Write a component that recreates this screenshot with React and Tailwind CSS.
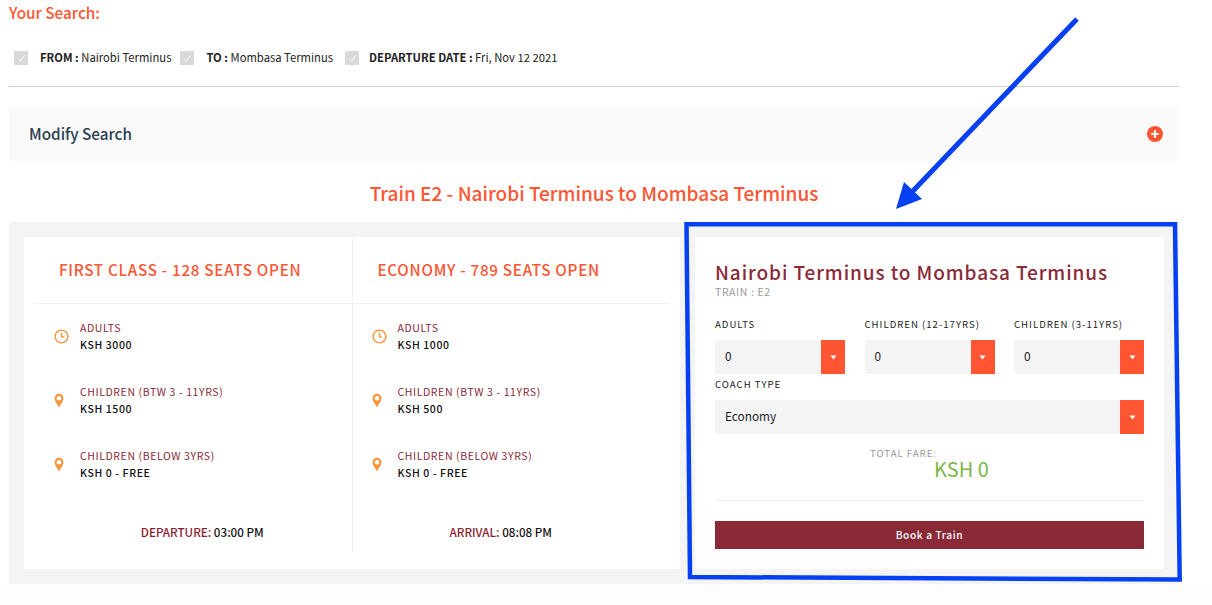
const font = { fontFamily: '"Noto Sans CJK SC", "Noto Sans", sans-serif' };

const fares = [
  {
    title: "FIRST CLASS - 128 SEATS OPEN",
    rows: [
      { icon: "clock", label: "ADULTS", value: "KSH 3000" },
      { icon: "pin", label: "CHILDREN (BTW 3 - 11YRS)", value: "KSH 1500" },
      { icon: "pin", label: "CHILDREN (BELOW 3YRS)", value: "KSH 0 - FREE" },
    ],
    footLabel: "DEPARTURE:",
    footValue: "03:00 PM",
  },
  {
    title: "ECONOMY - 789 SEATS OPEN",
    rows: [
      { icon: "clock", label: "ADULTS", value: "KSH 1000" },
      { icon: "pin", label: "CHILDREN (BTW 3 - 11YRS)", value: "KSH 500" },
      { icon: "pin", label: "CHILDREN (BELOW 3YRS)", value: "KSH 0 - FREE" },
    ],
    footLabel: "ARRIVAL:",
    footValue: "08:08 PM",
  },
];

function Check() {
  return (
    <span className="flex h-[14px] w-[14px] shrink-0 items-center justify-center bg-[#d9d9d9]">
      <svg width="9" height="9" viewBox="0 0 9 9" fill="none">
        <path d="M1.5 5 L3.5 7.2 L7.5 1.5" stroke="#fff" strokeWidth="1" />
      </svg>
    </span>
  );
}

function RowIcon({ type }) {
  if (type === "clock") {
    return (
      <svg width="15" height="15" viewBox="0 0 15 15" fill="none" stroke="#fb9338" strokeWidth="1.4">
        <circle cx="7.5" cy="7.5" r="6.4" />
        <path d="M7.5 4 V7.9 H10.3" />
      </svg>
    );
  }
  return (
    <svg width="10" height="15" viewBox="0 0 10 15" fill="none">
      <path
        d="M5 14.4 C3.8 11.6 0.6 8.8 0.6 5.2 A4.4 4.4 0 0 1 9.4 5.2 C9.4 8.8 6.2 11.6 5 14.4 Z"
        fill="#fb9338"
      />
      <circle cx="5" cy="5.2" r="2.3" fill="#fff" />
    </svg>
  );
}

function Select({ value }) {
  return (
    <div className="flex h-[34px] items-center justify-between bg-[#f4f4f4]">
      <span className="pb-[2px] pl-[10px] text-[11.8px] text-[#222]">{value}</span>
      <span className="flex h-full w-[24px] items-center justify-center bg-[#ff5533]">
        <svg width="7" height="5" viewBox="0 0 7 5">
          <path d="M0.5 0.5 H6.5 L3.5 4.5 Z" fill="#fff" />
        </svg>
      </span>
    </div>
  );
}

function FareColumn({ fare, last }) {
  return (
    <div className={`h-[315px] flex-1 ${last ? "" : "border-r border-[#f1f1f1]"}`}>
      <div className={`flex h-[67px] items-center border-b border-[#f1f1f1] pb-[2px] ${last ? "mr-[11px] pl-[25px]" : "ml-[10px] pl-[25px]"}`}>
        <h3 className="text-[15.25px] leading-[20px] font-medium tracking-[0.7px] text-[#ff5533]">
          {fare.title}
        </h3>
      </div>
      <div className={`flex flex-col gap-[30px] pt-[15px] ${last ? "pl-[19px]" : "pl-[30px]"}`}>
        {fare.rows.map((row) => (
          <div key={row.label} className="flex h-[34px] items-center gap-[11px]">
            <span className="flex w-[15px]">
              <RowIcon type={row.icon} />
            </span>
            <div>
              <p className="text-[10.5px] leading-[17px] tracking-[0.6px] text-[#8a2a37]">{row.label}</p>
              <p className="text-[10.5px] leading-[17px] font-medium tracking-[0.6px] text-[#111]">{row.value}</p>
            </div>
          </div>
        ))}
      </div>
      <p className={`mt-[42px] text-center text-[11.65px] leading-[18px] font-medium text-[#111] ${last ? "pr-[31px]" : "pl-[29px]"}`}>
        <span className="text-[#8a1c30]">{fare.footLabel}</span> {fare.footValue}
      </p>
    </div>
  );
}

export default function App() {
  return (
    <div className="relative h-[605px] w-[1212px] overflow-hidden bg-white" style={font}>
      <div className="w-[1179px] pl-[9px]">
        <h2 className="pt-[2px] text-[15.3px] leading-[20px] font-medium text-[#ff5533]">Your Search:</h2>

        <div className="mt-[26px] flex h-[20px] items-center pl-[5px] text-[11.25px] text-[#222]">
          <Check />
          <span className="ml-[12px] pb-[1px]"><b className="font-bold">FROM :</b> Nairobi Terminus</span>
          <span className="ml-[9px]"><Check /></span>
          <span className="ml-[12px] pb-[1px]"><b className="font-bold">TO :</b> Mombasa Terminus</span>
          <span className="ml-[12px]"><Check /></span>
          <span className="ml-[10px] pb-[1px]"><b className="font-bold">DEPARTURE DATE :</b> Fri, Nov 12 2021</span>
        </div>

        <div className="mt-[18px] border-t border-[#cccccc]" />

        <div className="mt-[20px] flex h-[54px] items-center justify-between bg-[#fafafa] pr-[16px] pl-[20px]">
          <span className="pb-[2px] text-[15.25px] font-medium text-[#2c3e50]">Modify Search</span>
          <svg width="16" height="16" viewBox="0 0 16 16">
            <circle cx="8" cy="8" r="8" fill="#ff5533" />
            <path d="M8 4.2 V11.8 M4.2 8 H11.8" stroke="#fff" strokeWidth="2.2" />
          </svg>
        </div>

        <h2 className="mt-[18px] mb-[15px] text-center text-[19px] leading-[28px] font-medium text-[#ff5533]">
          Train E2 - Nairobi Terminus to Mombasa Terminus
        </h2>

        <div className="flex h-[362px] gap-[15px] bg-[#f4f4f4] p-[15px]">
          <div className="flex w-[656px] bg-white">
            {fares.map((fare, i) => (
              <FareColumn key={fare.title} fare={fare} last={i === 1} />
            ))}
          </div>

          <div className="flex-1 bg-white px-[20px] pt-[23px]">
            <h3 className="text-[19px] leading-[24px] font-medium tracking-[0.9px] text-[#8a2a37]">
              Nairobi Terminus to Mombasa Terminus
            </h3>
            <p className="pt-[1px] text-[10.5px] leading-[14px] tracking-[0.6px] text-[#999]">TRAIN : E2</p>

            <div className="mt-[18px] flex justify-between">
              {["ADULTS", "CHILDREN (12-17YRS)", "CHILDREN (3-11YRS)"].map((label) => (
                <div key={label} className="w-[130px]">
                  <p className="mb-[9px] text-[9.6px] leading-[14px] tracking-[1px] text-[#222]">{label}</p>
                  <Select value="0" />
                </div>
              ))}
            </div>

            <p className="mt-[3px] mb-[9px] text-[9.6px] leading-[14px] tracking-[1px] text-[#222]">COACH TYPE</p>
            <Select value="Economy" />

            <div className="relative h-[66px]">
              <p className="absolute top-[12px] left-[155px] text-[9.6px] leading-[14px] tracking-[1px] text-[#999]">TOTAL FARE:</p>
              <p className="absolute top-[22px] left-[219px] text-[20px] leading-[26px] text-[#7ab648]">KSH 0</p>
            </div>

            <div className="border-t border-[#f1f1f1]" />

            <button className="mt-[20px] h-[28px] w-full bg-[#8a2a37] text-[10.2px] font-medium tracking-[0.6px] text-white">
              Book a Train
            </button>
          </div>
        </div>
      </div>

      <div className="h-[21px] bg-[#fdfdfd]" />

      {/* annotation drawn over the page */}
      <svg className="absolute top-0 left-0" width="1212" height="605" viewBox="0 0 1212 605" fill="none">
        <path d="M1077 19 L911 193" stroke="#0540f2" strokeWidth="5" />
        <path d="M896 209 L904 182 L922 199 Z" fill="#0540f2" />
        <path d="M686.5 224.3 L1175 224.3 L1179.7 579.5 L690 577 Z" stroke="#0540f2" strokeWidth="4.5" />
      </svg>
    </div>
  );
}
